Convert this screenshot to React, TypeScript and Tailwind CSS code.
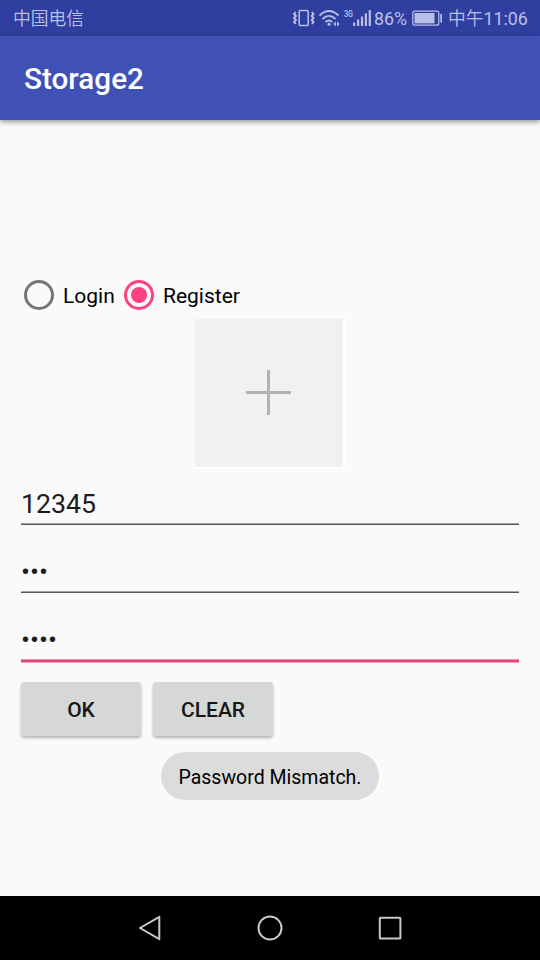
function StatusBar() {
  return (
    <header className="flex h-9 shrink-0 items-center bg-[#303f9f] pr-[11px] pl-[13px] text-[17.8px] leading-9 font-[350] text-[#b9c0e8]">
      <span className="pt-0.5">中国电信</span>
      <svg className="ml-auto shrink-0" width="78" height="36" viewBox="0 0 78 36" fill="none" stroke="#b9c0e8">
        <rect x="6.2" y="10.5" width="9" height="15" rx="1" strokeWidth="1.5" />
        <path d="M2.7 12l-1.6 2 1.8 2-1.8 2 1.8 2-1.8 2 1.6 2M18.9 12l1.6 2-1.8 2 1.8 2-1.8 2 1.8 2-1.6 2" strokeWidth="1.9" />
        <path d="M26.5 15.5Q36 6.5 45.5 15.5M29.5 19Q36 12.8 42.5 19M32.5 22.2Q36 18.8 39.3 22" strokeWidth="1.8" />
        <circle cx="36" cy="24.3" r="1.5" fill="#b9c0e8" stroke="none" />
        <path d="M42.8 21.5v5l-2.5-2.5zM44 21.5v5l2.5-2.5z" fill="#b9c0e8" stroke="none" />
        <text x="51" y="17" fill="#b9c0e8" stroke="none" fontSize="9.5" fontWeight="600" textLength="9" lengthAdjust="spacingAndGlyphs">3G</text>
        <path d="M61.2 22.5V26M65.1 19.5V26M69 16.5V26M72.9 13.5V26M76.8 10V26" strokeWidth="2.2" />
      </svg>
      <span className="ml-[3px] w-[34px] pt-0.5 text-[17.8px] font-normal whitespace-nowrap">86%</span>
      <svg className="ml-[4px] shrink-0" width="32" height="36" viewBox="0 0 32 36">
        <rect x="0.8" y="11.2" width="26" height="14" rx="2" fill="none" stroke="#b9c0e8" strokeWidth="1.2" />
        <rect x="2.5" y="13" width="20" height="10.4" fill="#b9c0e8" />
        <path d="M28.3 14h1.7v8.5h-1.7z" fill="#b9c0e8" />
      </svg>
      <span className="ml-[4px] w-[81px] pt-0.5 text-[17.8px] whitespace-nowrap">
        中午<span className="font-normal">11:06</span>
      </span>
    </header>
  );
}

function Radio({ label, checked, className }: { label: string; checked?: boolean; className: string }) {
  return (
    <label className={`flex items-center gap-[9px] ${className}`}>
      <span className={`flex size-[30px] items-center justify-center rounded-full border-3 ${checked ? "border-[#ff4081]" : "border-[#757575]"}`}>
        {checked && <span className="size-4 rounded-full bg-[#ff4081]" />}
      </span>
      <span className="pt-[3px]">{label}</span>
    </label>
  );
}

function Field({ text, active }: { text: string; active?: boolean }) {
  return (
    <div className="h-[68px]">
      <div className="h-[38px] text-[26.7px] leading-[38px] text-[#1c1c1c]">{text}</div>
      {active ? (
        <div className="h-1 border-t border-b border-t-[#ee8fb2] border-b-[#f0a0be] bg-[#e2457f]" />
      ) : (
        <div className="h-[2px] border-t border-b border-t-[#a5a5a5] border-b-[#555555]" />
      )}
    </div>
  );
}

function Button({ label }: { label: string }) {
  return (
    <button className="h-[54px] w-[120px] rounded-[3px] bg-[#d6d7d7] pt-[3px] text-[21px] font-medium text-[#161616] shadow-[0_2px_3px_rgba(0,0,0,0.28)]">
      {label}
    </button>
  );
}

export default function App() {
  return (
    <div className="flex h-[960px] w-[540px] flex-col overflow-hidden bg-[#fafafa] font-[Roboto,'Noto_Sans_CJK_SC',sans-serif] text-black">
      <StatusBar />
      <div className="flex h-21 shrink-0 items-center bg-[#3f51b5] px-6 pt-[3px] shadow-[0_2px_5px_rgba(0,0,0,0.4)]">
        <h1 className="text-[29.7px] font-medium text-white">Storage2</h1>
      </div>
      <main className="flex grow flex-col px-[21px] pt-40">
        <div className="flex h-[30px] items-center text-[21px]">
          <Radio label="Login" className="ml-[3px] w-[100px]" />
          <Radio label="Register" checked className="" />
        </div>
        <div className="mt-[9px] ml-[174px] flex size-[150px] border-r-2 border-b-2 border-white bg-[#f1f1f1]">
          <svg width="148" height="148" viewBox="0 0 148 148" stroke="#b2b2b2" strokeWidth="3">
            <path d="M51 73.4H96M73.5 51V96" />
          </svg>
        </div>
        <div className="mt-[16px]">
          <Field text="12345" />
          <Field text="•••" />
          <Field text="••••" active />
        </div>
        <div className="-mt-[7px] flex gap-3">
          <Button label="OK" />
          <Button label="CLEAR" />
        </div>
        <div className="mt-4 flex h-12 w-[218px] items-center justify-center self-center rounded-full bg-[#dcdcdc] pt-[3px] text-[19.5px] whitespace-nowrap">
          Password Mismatch.
        </div>
      </main>
      <nav className="h-16 shrink-0 bg-black">
        <svg width="540" height="64" viewBox="0 0 540 64" fill="none" stroke="#c8c8c8" strokeWidth="2" strokeLinejoin="round">
          <path d="M159.3 20.8V43.2L140 32z" />
          <circle cx="270" cy="32" r="11.5" />
          <rect x="379.8" y="21.8" width="20.6" height="20.6" rx="0.5" />
        </svg>
      </nav>
    </div>
  );
}
